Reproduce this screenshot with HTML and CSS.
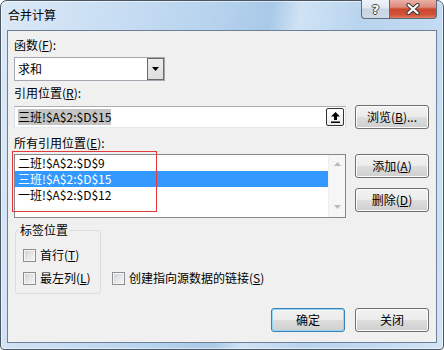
FILE: index.html
```html
<!DOCTYPE html>
<html lang="zh-CN">
<head>
<meta charset="utf-8">
<title>合并计算</title>
<link rel="stylesheet" href="styles.css">
</head>
<body>
<div class="window">
  <div class="titlebar">
    <span class="title">合并计算</span>
    <div class="caption-buttons">
      <div class="cap-btn help"><span class="help-glyph">?</span></div>
      <div class="cap-btn close">
        <svg width="14" height="12" viewBox="0 0 14 12">
          <path d="M2.5 2 L11.5 10 M11.5 2 L2.5 10" stroke="#3a3a3a" stroke-width="4.2" stroke-linecap="round" fill="none"/>
          <path d="M2.5 2 L11.5 10 M11.5 2 L2.5 10" stroke="#ffffff" stroke-width="2.2" stroke-linecap="round" fill="none"/>
        </svg>
      </div>
    </div>
  </div>
  <div class="client">
    <div class="label first">函数(<u>F</u>):</div>
    <div class="select">
      <span class="select-value">求和</span>
      <span class="drop-btn">
        <svg width="7" height="4" viewBox="0 0 7 4"><path d="M0 0 H7 L3.5 4 Z" fill="#000"/></svg>
      </span>
    </div>
    <div class="label">引用位置(<u>R</u>):</div>
    <div class="ref-row">
      <div class="textbox">
        <span class="sel-text">三班!$A$2:$D$15</span>
        <span class="collapse-btn">
          <svg width="9" height="11" viewBox="0 0 9 11">
            <path d="M4.5 0 L9 4.5 H6 V8 H3 V4.5 H0 Z" fill="#000"/>
            <rect x="0" y="9.5" width="9" height="1.5" fill="#000"/>
          </svg>
        </span>
      </div>
      <div class="btn">浏览(<u>B</u>)...</div>
    </div>
    <div class="label">所有引用位置(<u>E</u>):</div>
    <div class="list-row">
      <div class="listbox">
        <div class="items">
          <div class="item">二班!$A$2:$D$9</div>
          <div class="item selected">三班!$A$2:$D$15</div>
          <div class="item">一班!$A$2:$D$12</div>
        </div>
        <div class="scrollbar">
          <svg width="7" height="4" viewBox="0 0 7 4"><path d="M0 4 H7 L3.5 0 Z" fill="#b9b9b9"/></svg>
          <svg width="7" height="4" viewBox="0 0 7 4"><path d="M0 0 H7 L3.5 4 Z" fill="#b9b9b9"/></svg>
        </div>
      </div>
      <div class="btn-col">
        <div class="btn">添加(<u>A</u>)</div>
        <div class="btn">删除(<u>D</u>)</div>
      </div>
      <div class="annotation"></div>
    </div>
    <div class="options-row">
      <fieldset class="group">
        <legend>标签位置</legend>
        <div class="check"><span class="box"></span><span>首行(<u>T</u>)</span></div>
        <div class="check"><span class="box"></span><span>最左列(<u>L</u>)</span></div>
      </fieldset>
      <div class="check link-check"><span class="box"></span><span>创建指向源数据的链接(<u>S</u>)</span></div>
    </div>
    <div class="footer">
      <div class="btn default">确定</div>
      <div class="btn">关闭</div>
    </div>
  </div>
</div>
</body>
</html>
```

FILE: styles.css
```css
html, body {
  margin: 0;
  padding: 0;
}
body {
  width: 444px;
  height: 350px;
  overflow: hidden;
  background: #ffffff;
  font-family: "Noto Sans CJK SC", "Microsoft YaHei", sans-serif;
  font-size: 12px;
  line-height: 16px;
  color: #000;
}
u {
  text-decoration: underline;
  text-underline-offset: 1px;
}

/* window frame */
.window {
  box-sizing: border-box;
  width: 444px;
  height: 350px;
  border: 1px solid #4b5663;
  border-radius: 7px 7px 4px 4px;
  background: linear-gradient(100deg, #dbe9f7 0%, #c9def3 22%, #b7d3ee 42%, #a9c9e8 54%, #d0e3f5 60%, #b9d4ee 72%, #c3dbf2 88%, #d3e5f6 100%);
  box-shadow: inset 0 0 0 1px rgba(255, 255, 255, 0.55);
  display: flex;
  flex-direction: column;
}

.titlebar {
  height: 29px;
  display: flex;
  align-items: flex-start;
  flex: none;
}
.title {
  padding: 6px 0 0 7px;
  line-height: 16px;
  color: #000;
}
.caption-buttons {
  margin-left: auto;
  margin-right: 6px;
  margin-top: -1px;
  display: flex;
}
.cap-btn {
  box-sizing: border-box;
  height: 19px;
  border: 1px solid #5f6b78;
  border-top: none;
  display: flex;
  align-items: center;
  justify-content: center;
}
.cap-btn.help {
  width: 28px;
  border-right: none;
  border-radius: 0 0 0 4px;
  background: linear-gradient(#eef3f9 0%, #dfe7f0 45%, #c7d4e3 50%, #cfdbe8 100%);
}
.help-glyph {
  font-family: "DejaVu Sans", sans-serif;
  font-weight: bold;
  font-size: 13px;
  line-height: 13px;
  color: #ffffff;
  text-shadow: 1px 0 0 #444, -1px 0 0 #444, 0 1px 0 #444, 0 -1px 0 #444;
}
.cap-btn.close {
  width: 48px;
  border-radius: 0 0 4px 0;
  background: linear-gradient(#eab0a5 0%, #dc8a7c 40%, #c9492f 50%, #d14f37 80%, #df7a62 100%);
}

/* client area */
.client {
  flex: 1;
  margin: 0 6px 6px;
  border: 1px solid #6d8096;
  background: #f0f0f0;
  padding: 0 7px 0 6px;
  display: flex;
  flex-direction: column;
}
.label {
  margin-top: 4px;
  line-height: 16px;
  white-space: nowrap;
}
.label.first {
  margin-top: 6px;
}

.select {
  box-sizing: border-box;
  margin-top: 4px;
  width: 151px;
  height: 24px;
  border: 1px solid #a3a8b0;
  background: #fff;
  display: flex;
  align-items: stretch;
}
.select-value {
  flex: 1;
  padding-left: 3px;
  line-height: 22px;
}
.drop-btn {
  box-sizing: border-box;
  width: 17px;
  border: 1px solid #6a6a6a;
  background: linear-gradient(#ececec, #dedede);
  display: flex;
  align-items: center;
  justify-content: center;
}

.ref-row {
  margin-top: 4px;
  display: flex;
  align-items: center;
  gap: 9px;
}
.textbox {
  box-sizing: border-box;
  width: 332px;
  height: 22px;
  border: 1px solid #abadb3;
  border-left-color: #dbdfe6;
  border-right-color: #dbdfe6;
  border-bottom-color: #e3e9ef;
  background: #fff;
  display: flex;
  align-items: center;
  padding-left: 3px;
}
.sel-text {
  background: #c4c4c4;
  line-height: 16px;
}
.collapse-btn {
  box-sizing: border-box;
  margin-left: auto;
  margin-right: 1px;
  width: 18px;
  height: 18px;
  border: 1px solid #333;
  border-radius: 2px;
  background: linear-gradient(#ffffff, #ececec);
  display: flex;
  align-items: center;
  justify-content: center;
}

.btn {
  box-sizing: border-box;
  width: 74px;
  height: 24px;
  border: 1px solid #707070;
  border-radius: 3px;
  background: linear-gradient(#f2f2f2 0%, #ebebeb 50%, #dddddd 51%, #cfcfcf 100%);
  box-shadow: inset 0 0 0 1px #fbfbfb;
  display: flex;
  align-items: center;
  justify-content: center;
  line-height: 16px;
  white-space: nowrap;
}
.btn.default {
  border-color: #3c7fb1;
  box-shadow: inset 0 0 0 1px #8fd8f6;
}

.ref-row + .label {
  margin-top: 6px;
}

.list-row {
  position: relative;
  margin-top: 3px;
  display: flex;
  align-items: flex-start;
  gap: 9px;
}
.listbox {
  box-sizing: border-box;
  width: 332px;
  height: 64px;
  border: 1px solid #828790;
  background: #fff;
  display: flex;
}
.items {
  flex: 1;
}
.item {
  height: 16px;
  line-height: 16px;
  padding-left: 3px;
  white-space: nowrap;
}
.item.selected {
  background: #3399ff;
  color: #fff;
}
.scrollbar {
  width: 17px;
  background: #f6f6f6;
  border-left: 1px solid #eeeeee;
  display: flex;
  flex-direction: column;
  align-items: center;
  justify-content: space-between;
  padding: 7px 0 8px;
  box-sizing: border-box;
}
.btn-col {
  display: flex;
  flex-direction: column;
  gap: 10px;
}
.annotation {
  position: absolute;
  left: -2px;
  top: -3px;
  width: 145px;
  height: 61px;
  box-sizing: border-box;
  border: 1px solid #e23a3a;
  pointer-events: none;
}

.options-row {
  margin-top: 4px;
  display: flex;
  align-items: flex-end;
}
.group {
  margin: 0 0 0 1px;
  width: 86px;
  box-sizing: border-box;
  border: 1px solid #d5dfe5;
  border-radius: 3px;
  padding: 9px 0 7px 7px;
  display: flex;
  flex-direction: column;
  gap: 7px;
}
.group legend {
  padding: 0 1px;
  margin-left: -4px;
  line-height: 16px;
}
.check {
  display: flex;
  align-items: center;
  height: 16px;
  white-space: nowrap;
}
.box {
  box-sizing: border-box;
  width: 13px;
  height: 13px;
  border: 1px solid #8e8f8f;
  background: linear-gradient(135deg, #cbcfd4 0%, #e8eaec 60%, #f6f6f6 100%);
  box-shadow: inset 0 0 0 1px #f4f4f4;
  margin-right: 4px;
  flex: none;
}
.link-check {
  margin-left: 11px;
  margin-bottom: 8px;
}

.footer {
  margin-top: 14px;
  display: flex;
  justify-content: flex-end;
  gap: 10px;
}
```
